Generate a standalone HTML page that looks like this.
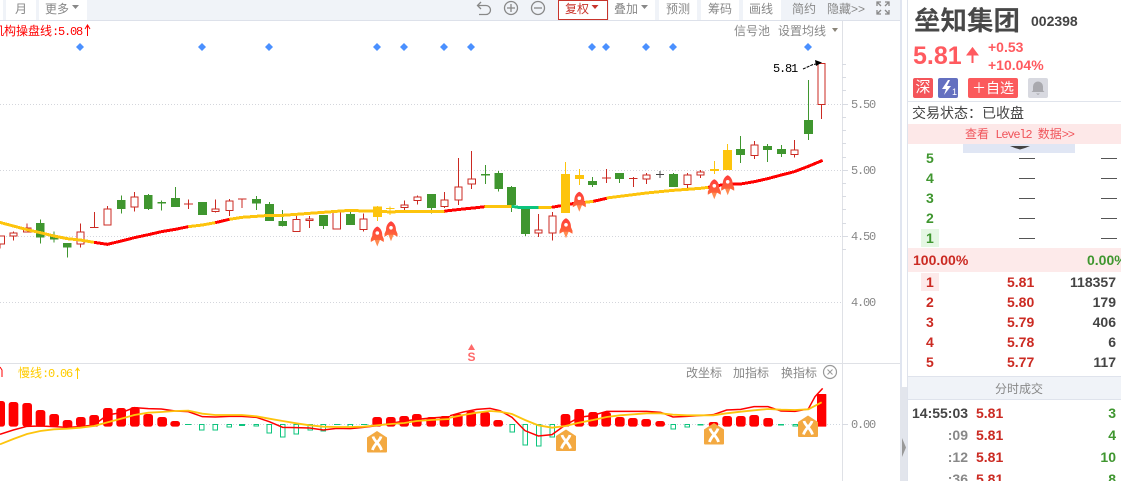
<!DOCTYPE html>
<html lang="zh"><head><meta charset="utf-8"><title>垒知集团</title>
<style>
html,body{margin:0;padding:0;background:#fff}
#p{position:relative;width:1121px;height:481px;overflow:hidden;background:#fff;font-family:"Liberation Sans","Noto Sans CJK SC",sans-serif;font-size:12px;color:#888}
.a{position:absolute}
.t{position:absolute;white-space:nowrap;line-height:20px;height:20px}
.m{font-family:"Liberation Mono","Noto Sans CJK SC",monospace;letter-spacing:-1.2px}
.w{position:absolute;top:0;height:20px;background:#fff}
.b{position:absolute;white-space:nowrap;font-weight:bold;font-size:14px;line-height:20px;height:20px}
.r{color:#cb2a22}.g{color:#3f962f}.d{color:#444}.y{color:#888}
.dash{position:absolute;height:1px;width:16px;background:#555}
svg{position:absolute;left:0;top:0}
.br{width:29px;rx:8px;fill:#f00}
</style></head><body><div id="p">
<div class="a" style="left:0;top:0;width:900px;height:20px;background:#f0f3f8"></div>
<div class="a" style="left:0;top:20px;width:900px;height:1px;background:#dde1ea"></div>
<div class="a" style="left:900px;top:0;width:2px;height:481px;background:#e0e5f0"></div>
<div class="a" style="left:900px;top:387px;width:7px;height:94px;background:#e2e5ec"></div>
<div class="a" style="left:907px;top:0;width:1px;height:481px;background:#dfe3ec"></div>
<div class="w" style="left:0;width:3px"></div>
<div class="w" style="left:6px;width:30px"></div>
<div class="w" style="left:39px;width:48px"></div>
<div class="w" style="left:558px;width:48px;height:18px;border:1px solid #c8342c"></div>
<div class="w" style="left:609px;width:46px"></div>
<div class="w" style="left:659px;width:38px"></div>
<div class="w" style="left:701px;width:38px"></div>
<div class="w" style="left:743px;width:38px"></div>
<div class="t" style="left:15px;top:-1px">月</div>
<div class="t" style="left:45px;top:-1px">更多</div>
<div class="t" style="left:565px;top:-1px;color:#c8342c">复权</div>
<div class="t" style="left:614px;top:-1px">叠加</div>
<div class="t" style="left:666px;top:-1px">预测</div>
<div class="t" style="left:708px;top:-1px">筹码</div>
<div class="t" style="left:749px;top:-1px">画线</div>
<div class="t" style="left:792px;top:-1px">简约</div>
<div class="t" style="left:827px;top:-1px">隐藏&gt;&gt;</div>
<div class="t" style="left:-8px;top:21px;color:#f00">机构操盘线<span class="m">:5.08</span></div>
<div class="t" style="left:734px;top:21px">信号池</div>
<div class="t" style="left:778px;top:21px">设置均线</div>
<div class="t m" style="left:773px;top:59px;color:#000">5.81</div>
<div class="t m" style="left:851px;top:95px">5.50</div>
<div class="t m" style="left:851px;top:161px">5.00</div>
<div class="t m" style="left:851px;top:227px">4.50</div>
<div class="t m" style="left:851px;top:293px">4.00</div>
<div class="t m" style="left:851px;top:415px">0.00</div>
<div class="t" style="left:18px;top:363px;color:#fc0">慢线<span class="m">:0.06</span></div>
<div class="t" style="left:686px;top:363px">改坐标</div>
<div class="t" style="left:733px;top:363px">加指标</div>
<div class="t" style="left:781px;top:363px">换指标</div>
<svg width="1121" height="481" viewBox="0 0 1121 481" fill="none">
<defs>
<linearGradient id="rg" x1="0" y1="0" x2="0" y2="1"><stop offset="0" stop-color="#ff3b3b"/><stop offset="1" stop-color="#ff6a3a"/></linearGradient>
<g id="rk">
<path d="M-2.800 13h5.600L0 20z" fill="#ff8a50"/>
<path d="M0 0C3.500 1.500 5 5 5 9L6.500 12.500V15.500L3 13.500H-3L-6.500 15.500V12.500L-5 9C-5 5-3.500 1.500 0 0z" fill="url(#rg)"/>
<circle cx="0" cy="6.500" r="1.800" fill="#fff"/>
</g>
<g id="xi">
<path d="M10 0L20 6.500V20.500a1 1 0 0 1-1 1H1a1 1 0 0 1-1-1V6.500z" fill="#f3a941"/>
<path d="M6 5.500C7 10 13 13 14.500 19M14 5.500C13 10 7 13 5.500 19" stroke="#fff" stroke-width="2.800"/>
</g>
</defs>
<g stroke="#d4d6dc" stroke-dasharray="1 2">
<path d="M0 104.500H842M0 170.500H842M0 236.500H842M0 302.500H842"/>
<path d="M125 424.500H842" stroke="#cfd6de"/>
</g>
<path d="M842.500 21V481M0 363.500H900" stroke="#dfe1e6"/>
<path d="M842 64.500h4M842 77.500h4M842 90.500h4M842 104.500h6M842 117.500h4M842 130.500h4M842 143.500h4M842 157.500h4M842 170.500h6M842 183.500h4M842 196.500h4M842 209.500h4M842 223.500h4M842 236.500h6M842 249.500h4M842 424.500h6" stroke="#d8dbe2"/>
<path d="M641 5h7l-3.500 4zM72 5h7l-3.500 4z" fill="#888"/>
<path d="M591.500 5h7l-3.500 4z" fill="#c8342c"/>
<path d="M832 28h6l-3 4z" fill="#8a8478"/>
<path d="M481 2l-3.500 3.500 3.500 3.500M478 5.500h8a4.500 4.500 0 0 1 0 9h-7" stroke="#888" stroke-width="1.300"/>
<g stroke="#888" stroke-width="1.300"><circle cx="511" cy="8" r="6.500"/><path d="M507 8h8M511 4v8"/><circle cx="538" cy="8" r="6.500"/><path d="M534 8h8"/></g>
<path d="M877 6V2h4M877 2l4 4M885 2h4v4M889 2l-4 4M877 10v4h4M877 14l4-4M885 14h4v-4M889 14l-4-4" stroke="#888" stroke-width="1.300"/>
<g fill="#4a90ff"><path d="M80 43l4 4-4 4-4-4zM202 43l4 4-4 4-4-4zM269 43l4 4-4 4-4-4zM377 43l4 4-4 4-4-4zM404 43l4 4-4 4-4-4zM444 43l4 4-4 4-4-4zM471 43l4 4-4 4-4-4zM592 43l4 4-4 4-4-4zM606 43l4 4-4 4-4-4zM646 43l4 4-4 4-4-4zM673 43l4 4-4 4-4-4zM808 43l4 4-4 4-4-4z"/></g>
<path d="M87.500 26v10M85 29l2.500-4 2.500 4" stroke="#f00"/>
<path d="M77.500 368v11M75.500 371l2-3 2 3" stroke="#fc0"/>
<path d="M0 367l2 3v7" stroke="#f00"/>

<g transform="scale(.33333)" shape-rendering="crispEdges">
<g stroke="#3f962f" stroke-width="3"><path d="M121 658V731M162 694V727M202 729V773M364 586V641M445 582V630M484 601V632M526 561V621M607 606V645M769 588V630M808 606V663M848 630V680M970 645V687M1051 635V675M1294 582V641"/></g>
<g fill="#3f962f"><path d="M108 669h26v44h-26zM150 710h26v9h-26zM189 729h26v14h-26zM351 600h26v27h-26zM432 585h26v42h-26zM472 606h26v5h-26zM513 594h27v27h-27zM594 606h27v39h-27zM756 597h27v14h-27zM795 612h27v51h-27zM835 663h26v15h-26zM957 645h27v33h-27zM1038 642h27v33h-27zM1281 582h27v42h-27z"/></g>
<g stroke="#cb2a22" stroke-width="3">
<path d="M0 733V745M40 695V722M81 670V698M241 670V743M283 636V683M322 618V677M403 576V635M565 598V627M646 598V638M688 597V648M726 596V624M889 647V695M929 648V684M1090 640V695M1213 601V630M1252 586V614M1333 576V624"/>
<path d="M270 683H295M552 612H579M714 597H739"/>
<path fill="#fff" d="M-13 708.500h27v24h-27zM29.500 698.500h22v10h-22zM70.500 684.500h23v12h-23zM230.500 695.500h22v37h-22zM311.500 626.500h22v49h-22zM392.500 590.500h22v31h-22zM635.500 626.500h22v8h-22zM677.500 602.500h22v29h-22zM878.500 658.500h22v36h-22zM917.500 656.500h22v5h-22zM999.500 636.500h22v51h-22zM1079.500 656.500h22v32h-22zM1202.500 614.500h22v8h-22zM1241.500 590.500h22v11h-22zM1322.500 599.500h22v20h-22z"/>
</g>
<g stroke="#fdc40d" stroke-width="3"><path d="M1132 618V663M1170 619V645M1158 626H1183"/></g>
<path fill="#fdc40d" d="M1119 620h27v31h-27z"/>
<polyline stroke="#fdc40d" stroke-width="9" points="-5,666 40,678 81,689 121,698 162,708 202,716 241,720 282,727"/>
<polyline stroke="#f00" stroke-width="9" points="282,727 322,733 364,723 403,713 445,704 484,695 526,688 565,680"/>
<polyline stroke="#fdc40d" stroke-width="9" points="565,680 607,675 646,668"/>
<polyline stroke="#f00" stroke-width="9" points="646,668 688,658"/>
<polyline stroke="#fdc40d" stroke-width="9" points="688,658 726,652 769,649 808,646 848,646 889,643 929,640 970,637 1010,634 1051,631 1090,633 1132,633 1170,636 1213,634 1333,634"/>
<polyline stroke="#f00" stroke-width="9" points="1333,634 1350,631"/>
</g>

<g transform="translate(450 0) scale(.33333)" shape-rendering="crispEdges">
<g stroke="#3f962f" stroke-width="3"><path d="M106 495V552M146 513V575M184 558V636M226 627V708M427 531V561M509 519V549M670 519V561M872 408V489M953 432V486M994 435V471M1075 240V420"/></g>
<g fill="#3f962f"><path d="M93 522h27v5H93zM133 519h26v48h-26zM171 561h27v54h-27zM213 627h27v75h-27zM414 543h27v12h-27zM495 519h27v18h-27zM657 522h27v39h-27zM858 447h27v18h-27zM939 438h27v12h-27zM981 447h27v15h-27zM1062 360h27v42h-27z"/></g>
<g stroke="#cb2a22" stroke-width="3">
<path d="M25 474V615M65 453V567M265 642V711M307 636V722M469 507V549M550 531V561M590 519V552M712 519V564M751 510V534M913 423V477M1033 420V473M1114 190V357"/>
<path d="M456 534H483M537 536H563"/>
<path fill="#fff" d="M14.500 560.500h22v40h-22zM54.500 536.500h22v16h-22zM254.500 689.500h22v10h-22zM296.500 647.500h22v52h-22zM578.500 524.500h22v12h-22zM701.500 524.500h22v29h-22zM740.500 515.500h22v10h-22zM902.500 434.500h22v32h-22zM1022.500 449.500h22v14h-22zM1103.500 190.500h22v123h-22z"/>
</g>
<path stroke="#444" stroke-width="3" d="M630 513V534M618 523H642"/>
<g stroke="#fdc40d" stroke-width="3"><path d="M346 486V639M388 507V555M793 483V522M832 432V510"/></g>
<path fill="#fdc40d" d="M375 525h27v12h-27zM780 507h27v6h-27zM819 450h27v60h-27z"/>
<polyline stroke="#f00" stroke-width="9" points="-5,632 40,627 80,623 104,620"/>
<polyline stroke="#fdc40d" stroke-width="9" points="104,619 185,619"/>
<polyline stroke="#0cc47e" stroke-width="9" points="185,619 205,622 265,622"/>
<polyline stroke="#fdc40d" stroke-width="9" points="265,622 305,622"/>
<polyline stroke="#f00" stroke-width="9" points="305,622 333,617"/>
<path fill="#fdc40d" d="M333 522h27v117h-27z"/>
<polyline stroke="#f00" stroke-width="9" points="360,612 405,607"/>
<polyline stroke="#fdc40d" stroke-width="9" points="405,607 430,604"/>
<polyline stroke="#f00" stroke-width="9" points="430,604 470,595"/>
<polyline stroke="#fdc40d" stroke-width="9" points="470,594 510,589 550,584 590,579 630,575 670,571 712,568 751,565 775,562"/>
<polyline stroke="#f00" stroke-width="9" points="775,562 793,558 832,553 872,552 913,545 953,536 994,525 1033,515 1075,499 1118,481"/>
</g>
<path d="M803 69l10-4.500 6-1" stroke="#000" stroke-dasharray="3 1"/>
<path d="M815 60l7 2.500-6 3.500z" fill="#000"/>

<use href="#rk" x="377.300" y="226.500"/>
<use href="#rk" x="391" y="221.300"/>
<use href="#rk" x="566" y="218.300"/>
<use href="#rk" x="579.300" y="191.700"/>
<use href="#rk" x="714.300" y="179.300"/>
<use href="#rk" x="727.700" y="175.300"/>

<path d="M471.500 344l3.500 6h-7z" fill="#ff6a6a"/>
<text x="471.500" y="361" text-anchor="middle" font-family="Liberation Sans" font-weight="bold" font-size="12" fill="#ff6a6a">S</text>

<g transform="translate(0 340) scale(.33333)">
<rect class="br" x="-14" y="183" height="77"/><rect class="br" x="26" y="186" height="74"/><rect class="br" x="67" y="189" height="71"/><rect class="br" x="107" y="210" height="50"/><rect class="br" x="148" y="222" height="38"/><rect class="br" x="188" y="240" height="24"/><rect class="br" x="228" y="231" height="29"/><rect class="br" x="268" y="225" height="35"/><rect class="br" x="309" y="204" height="56"/><rect class="br" x="349" y="204" height="56"/><rect class="br" x="390" y="201" height="59"/><rect class="br" x="430" y="222" height="38"/><rect class="br" x="472" y="231" height="29"/><rect class="br" x="511" y="243" height="17"/>
<rect class="br" x="1117" y="231" height="29"/><rect class="br" x="1158" y="231" height="29"/><rect class="br" x="1198" y="228" height="32"/><rect class="br" x="1236" y="222" height="38"/><rect class="br" x="1279" y="231" height="29"/><rect class="br" x="1319" y="228" height="32"/>
<g shape-rendering="crispEdges"><path stroke="#0cc47e" stroke-width="3" d="M555 253.500H575M598.500 253.500h14v17h-14zM638.500 253.500h14v17h-14zM680.500 253.500h14v8h-14zM761.500 253.500h14v5h-14zM800.500 253.500h14v26h-14zM841.500 253.500h14v38h-14zM881.500 253.500h14v29h-14zM923.500 253.500h14v17h-14zM962.500 253.500h14v20h-14zM1002 253.500H1022M1043.500 253.500h14v8h-14zM1083 253.500H1103"/>
<path fill="#0cc47e" d="M717 252h18v6h-18z"/></g>
<polyline stroke="#f00" stroke-width="4.500" points="0,283 40,270 81,259 121,258 162,260 202,262 241,260 282,255 322,225 364,218 403,203 445,206 484,207 526,213 565,215 607,230 646,231 688,229 726,229 769,232 808,245 848,262 889,263 929,264 970,270 1010,265 1051,266 1090,262 1132,257 1172,250 1213,243 1250,238 1293,234 1350,230"/>
<polyline stroke="#fdc40d" stroke-width="5.500" points="0,313 40,297 81,282 121,273 162,268 202,266 241,263 282,258 322,247 364,236 403,225 445,218 484,216 526,213 565,212 607,221 646,225 688,225 726,225 769,229 808,236 848,243 889,250 929,256 970,260 1010,261 1051,261 1090,260 1132,256 1172,252 1213,249 1250,243 1293,240 1350,237"/>
</g>
<g transform="translate(450 340) scale(.33333)">
<rect class="br" x="9" y="222" height="38"/><rect class="br" x="49" y="213" height="47"/><rect class="br" x="91" y="216" height="44"/><rect class="br" x="130" y="240" height="20"/>
<rect class="br" x="332" y="222" height="38"/><rect class="br" x="373" y="207" height="53"/><rect class="br" x="415" y="216" height="44"/><rect class="br" x="454" y="216" height="44"/><rect class="br" x="495" y="231" height="29"/><rect class="br" x="534" y="234" height="26"/><rect class="br" x="574" y="237" height="23"/><rect class="br" x="616" y="243" height="17"/>
<rect class="br" x="776" y="246" height="14"/><rect class="br" x="817" y="228" height="32"/><rect class="br" x="858" y="228" height="32"/><rect class="br" x="898" y="225" height="35"/><rect class="br" x="940" y="234" height="26"/><rect x="1101" y="162" width="28" height="98" rx="2" fill="#f00"/>
<g shape-rendering="crispEdges"><path stroke="#0cc47e" stroke-width="3" d="M179.500 253.500h14v23h-14zM218.500 253.500h14v62h-14zM259.500 253.500h14v65h-14zM299.500 253.500h14v38h-14zM662.500 253.500h14v14h-14zM704.500 253.500h14v8h-14zM1028.500 253.500h14v5h-14z"/>
<path fill="#0cc47e" d="M742 252h18v5h-18zM984 252h18v5h-18z"/></g>
<polyline stroke="#f00" stroke-width="4.500" points="0,227 40,216 80,208 120,205 150,212 186,232 225,272 265,288 306,284 346,255 388,232 429,226 470,214 590,214 632,217 669,231 711,229 790,224 830,210 872,208 912,200 954,200 993,213 1035,214 1075,207 1095,170 1118,145"/>
<polyline stroke="#fdc40d" stroke-width="5.500" points="0,233 40,225 80,218 120,213 150,215 186,222 225,240 265,256 306,263 346,258 388,248 429,240 470,231 510,226 590,220 632,220 669,224 711,226 790,226 830,220 872,215 912,211 954,207 993,209 1035,210 1075,208 1115,187"/>
</g>
<use href="#xi" x="367" y="431"/>
<use href="#xi" x="556" y="429.500"/>
<use href="#xi" x="704" y="423"/>
<use href="#xi" x="798" y="415.500"/>
<circle cx="830" cy="372" r="6.500" stroke="#999" stroke-width="1.200"/>
<path d="M827.500 369.500l5 5M832.500 369.500l-5 5" stroke="#999"/>
<path d="M902 438l4 9.500-4 9.500z" fill="#999"/>
</svg>

<div class="a" style="left:914px;top:5px;font-size:26.500px;font-weight:bold;line-height:32px;color:#484848;white-space:nowrap">垒知集团</div>
<div class="b" style="left:1031px;top:11px;color:#444">002398</div>
<div class="a" style="left:913px;top:41px;font-size:25px;font-weight:bold;line-height:30px;color:#ff5a5f">5.81</div>
<svg width="1121" height="481"><path d="M972.500 63V52.500M968 54.500l4.500-6 4.500 6z" stroke="#ff5a5f" stroke-width="2" fill="#ff5a5f"/></svg>
<div class="b" style="left:988px;top:37px;color:#ff5a5f">+0.53</div>
<div class="b" style="left:988px;top:55px;color:#ff5a5f">+10.04%</div>
<div class="a" style="left:913px;top:78px;width:20px;height:20px;background:#f4555a;border-radius:2px;color:#fff;font-size:15px;line-height:20px;text-align:center">深</div>
<div class="a" style="left:938px;top:78px;width:20px;height:20px;background:#6470c0;border-radius:2px"></div>
<svg width="1121" height="481"><path d="M948 80l-6 9h4l-2 6 7-9h-4l3-6z" fill="#fff"/></svg>
<div class="a" style="left:952px;top:87px;color:#fff;font-size:9px;line-height:11px">1</div>
<div class="a" style="left:968px;top:78px;width:50px;height:20px;background:#fb5a5c;border-radius:2px;color:#fff;font-size:14px;line-height:20px;text-align:center;white-space:nowrap">＋自选</div>
<div class="a" style="left:1028px;top:78px;width:20px;height:20px;background:#d8d9e0;border-radius:2px"></div>
<svg width="1121" height="481"><path d="M1038 81.500a5 5 0 0 1 5 5v4l1.500 1.500h-13l1.500-1.500v-4a5 5 0 0 1 5-5zM1036 93.500h4l-2 1.500z" fill="#a9a9ae"/></svg>
<div class="a" style="left:908px;top:101px;width:213px;height:1px;background:#e0e4ec"></div>
<div class="t" style="left:912px;top:103px;font-size:14px;color:#444">交易状态：已收盘</div>
<div class="a" style="left:908px;top:124px;width:213px;height:20px;background:#fde8e8"></div>
<div class="t" style="left:965px;top:124px;color:#f0545a;word-spacing:3px">查看 <span class="m">Level2</span> 数据<span class="m">&gt;&gt;</span></div>
<div class="a" style="left:963px;top:144px;width:112px;height:9px;background:#e0e6f4"></div>
<svg width="1121" height="481"><path d="M1010 146h20l-5 2-5 1.500-5-1.500z" fill="#444"/></svg>

<div class="b g" style="left:926px;top:148px">5</div><div class="dash" style="left:1019px;top:158px"></div><div class="dash" style="left:1101px;top:158px"></div>
<div class="b g" style="left:926px;top:168px">4</div><div class="dash" style="left:1019px;top:178px"></div><div class="dash" style="left:1101px;top:178px"></div>
<div class="b g" style="left:926px;top:188px">3</div><div class="dash" style="left:1019px;top:198px"></div><div class="dash" style="left:1101px;top:198px"></div>
<div class="b g" style="left:926px;top:208px">2</div><div class="dash" style="left:1019px;top:218px"></div><div class="dash" style="left:1101px;top:218px"></div>
<div class="a" style="left:921px;top:229px;width:18px;height:18px;background:#e5f7e3"></div>
<div class="b g" style="left:926px;top:228px">1</div><div class="dash" style="left:1019px;top:238px"></div><div class="dash" style="left:1101px;top:238px"></div>
<div class="a" style="left:908px;top:248px;width:213px;height:24px;background:#fdeaea"></div>
<div class="b r" style="left:913px;top:250px">100.00%</div>
<div class="b g" style="left:1087px;top:250px">0.00%</div>
<div class="a" style="left:921px;top:273px;width:18px;height:18px;background:#fdeaea"></div>
<div class="b r" style="left:926px;top:272px">1</div><div class="b r" style="left:1007px;top:272px">5.81</div><div class="b d" style="right:5px;top:272px">118357</div>
<div class="b r" style="left:926px;top:292px">2</div><div class="b r" style="left:1007px;top:292px">5.80</div><div class="b d" style="right:5px;top:292px">179</div>
<div class="b r" style="left:926px;top:312px">3</div><div class="b r" style="left:1007px;top:312px">5.79</div><div class="b d" style="right:5px;top:312px">406</div>
<div class="b r" style="left:926px;top:332px">4</div><div class="b r" style="left:1007px;top:332px">5.78</div><div class="b d" style="right:5px;top:332px">6</div>
<div class="b r" style="left:926px;top:352px">5</div><div class="b r" style="left:1007px;top:352px">5.77</div><div class="b d" style="right:5px;top:352px">117</div>
<div class="a" style="left:908px;top:376px;width:213px;height:22px;background:#f0f3f8;border-top:1px solid #dfe3ec;border-bottom:1px solid #dfe3ec"></div>
<div class="t" style="left:995px;top:379px;color:#888">分时成交</div>
<div class="b d" style="left:912px;top:403px">14:55:03</div><div class="b r" style="left:976px;top:403px">5.81</div><div class="b g" style="right:5px;top:403px">3</div>
<div class="b y" style="right:153px;top:425px">:09</div><div class="b r" style="left:976px;top:425px">5.81</div><div class="b g" style="right:5px;top:425px">4</div>
<div class="b y" style="right:153px;top:447px">:12</div><div class="b r" style="left:976px;top:447px">5.81</div><div class="b g" style="right:5px;top:447px">10</div>
<div class="b y" style="right:153px;top:469px">:36</div><div class="b r" style="left:976px;top:469px">5.81</div><div class="b g" style="right:5px;top:469px">8</div>
</div></body></html>
